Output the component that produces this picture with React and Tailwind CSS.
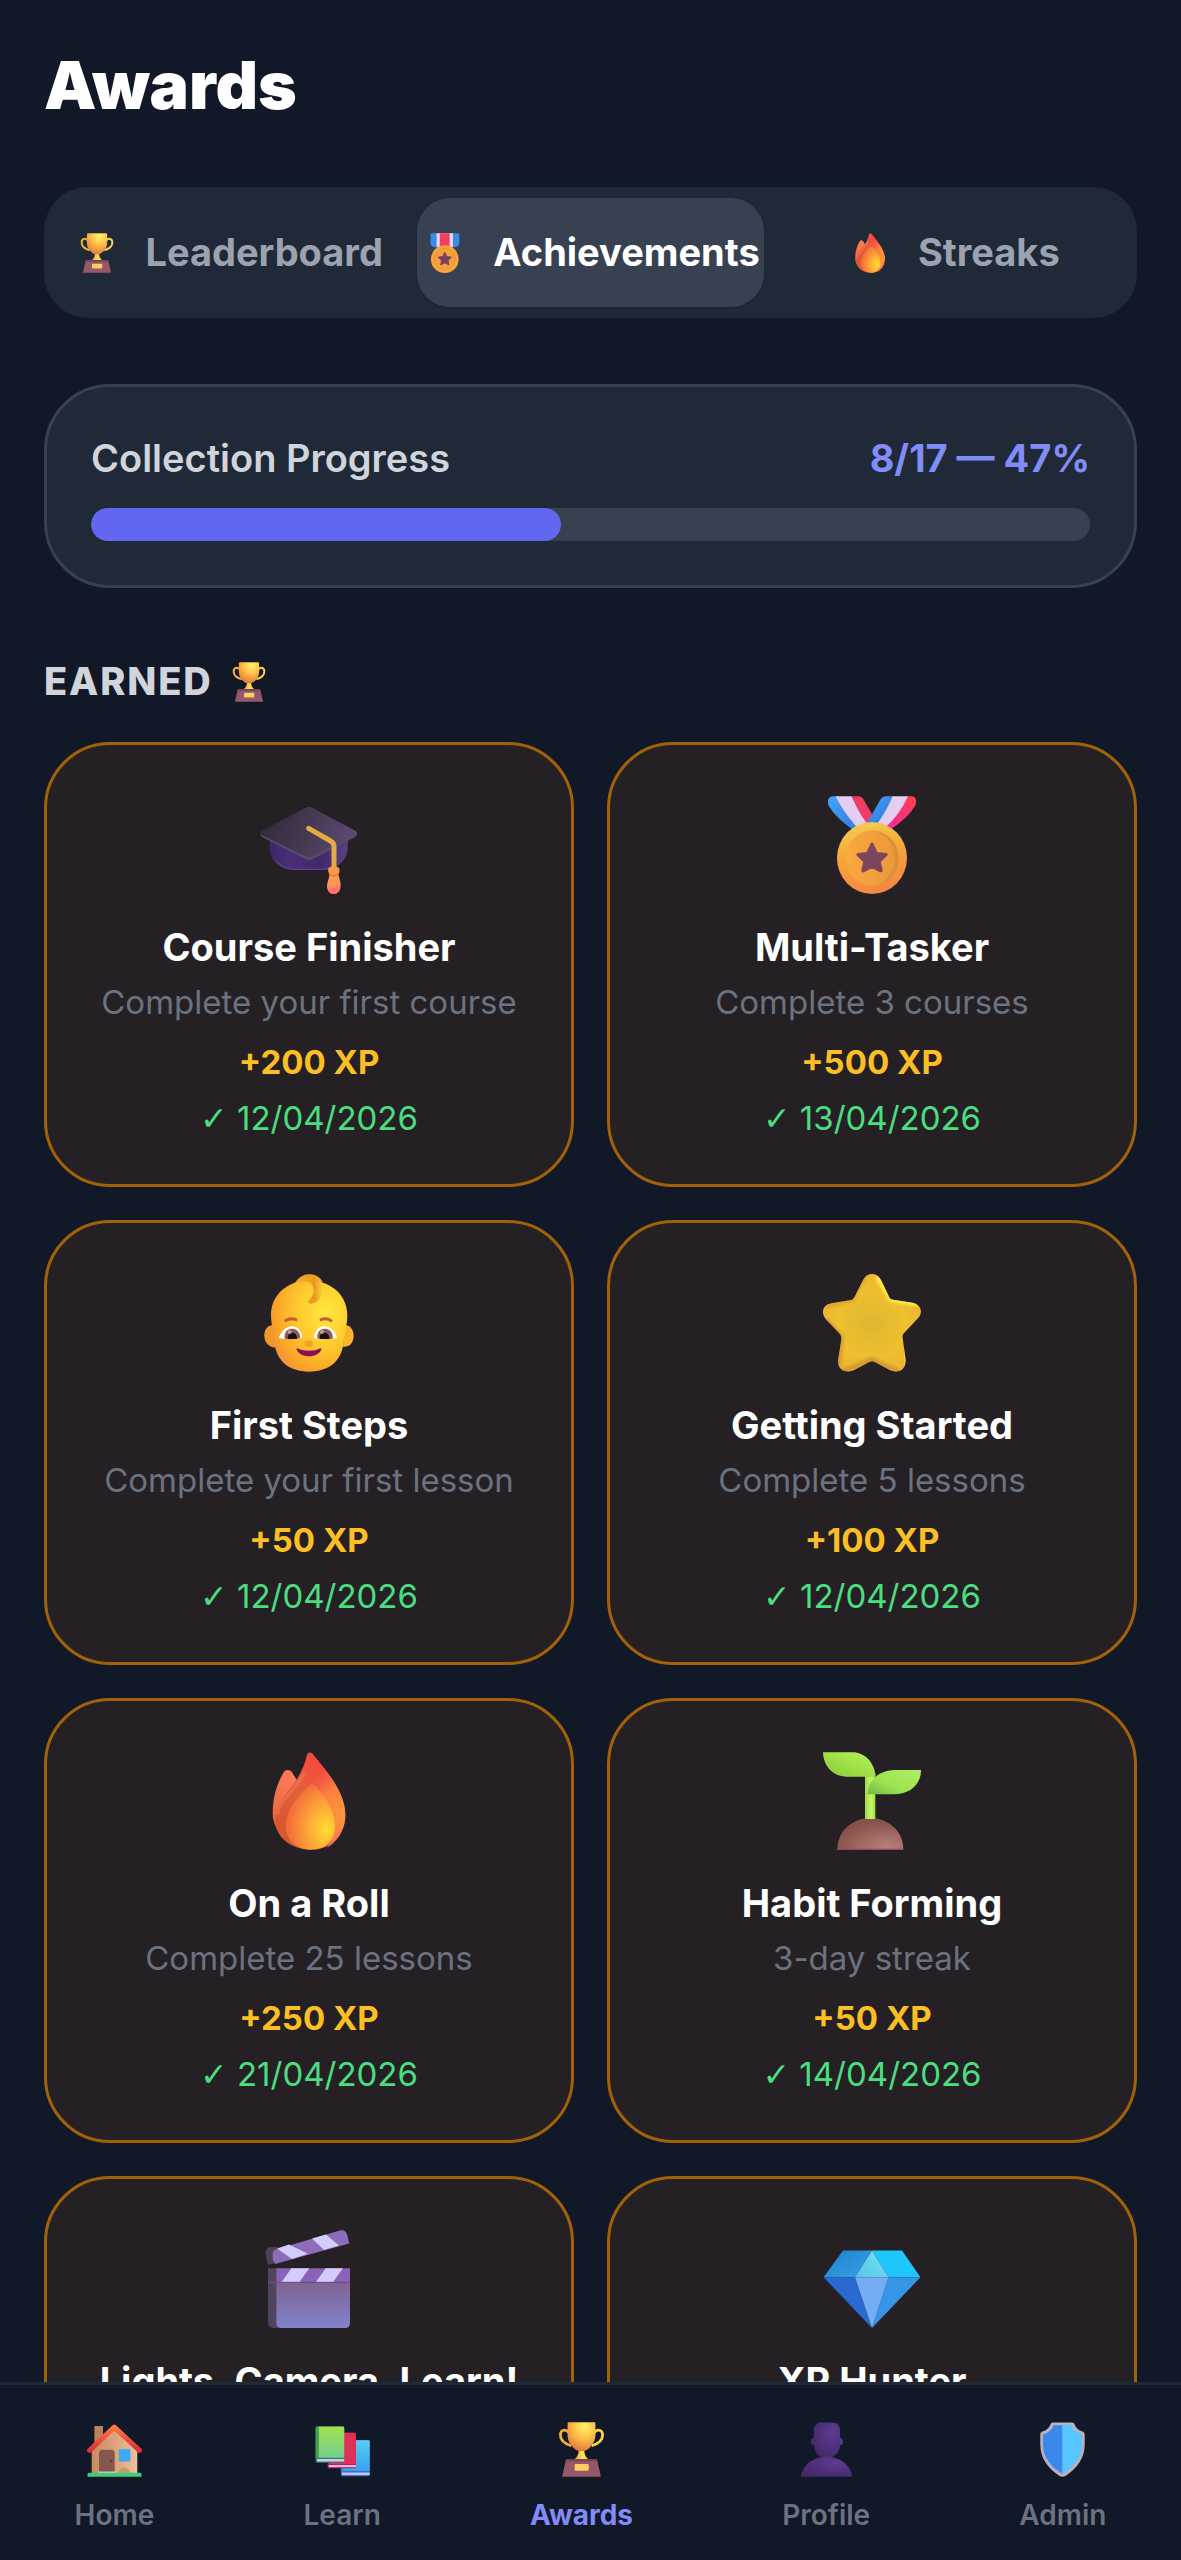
import React, { useState } from "react";

const Trophy = ({ className }) => (
	<svg viewBox="0 0 32 32" className={className} aria-hidden="true">
		<defs>
			<radialGradient id="cup" cx="0.62" cy="0.15" r="0.9">
				<stop offset="0" stopColor="#fff36b" />
				<stop offset="0.45" stopColor="#fdc046" />
				<stop offset="1" stopColor="#e2743c" />
			</radialGradient>
			<linearGradient id="cupStem" x1="0" x2="1">
				<stop offset="0" stopColor="#e69a3c" />
				<stop offset="0.6" stopColor="#ffe35c" />
				<stop offset="1" stopColor="#f5b843" />
			</linearGradient>
		</defs>
		<path d="M8.6 6.2C6.8 3.6 3.8 4.6 3.7 7.4c0 3.2 3 5.4 6.4 6.4" fill="none" stroke="#f3b03c" strokeWidth="1.6" />
		<path d="M23.4 6.2c1.800-2.600 4.800-1.600 4.900 1.200 0 3.200-3 5.400-6.400 6.400" fill="none" stroke="#ffd444" strokeWidth="1.6" />
		<path d="M14.400 15.500h3.200c0 3 .6 4.700 2.700 6.300h-8.600c2.100-1.600 2.700-3.300 2.700-6.300z" fill="url(#cupStem)" />
		<path d="M8.600.2h14.800c.4 0 .7.3.7.7v7c0 4.600-4.200 8.800-6.700 9h-2.800c-2.500-.2-6.700-4.400-6.700-9v-7c0-.4.3-.7.7-.7z" fill="url(#cup)" />
		<path d="M7.800 21.600h16.400c.5 0 .8.3.9.7l2.200 9.500H4.700l2.200-9.500c.1-.4.400-.7.900-.7z" fill="#95576a" />
		<path d="M7.800 21.600h16.400c.5 0 .8.3.9.7l.1.600H6.800l.1-.600c.1-.4.400-.7.900-.7z" fill="#7d4157" />
		<rect x="12" y="24.500" width="8.200" height="3.800" rx=".6" fill="#ffcd62" />
	</svg>
);

const SportsMedal = ({ className }) => (
	<svg viewBox="0 0 39 39" className={className} aria-hidden="true">
		<path d="M7 .3h25c.8 0 1.400.6 1.400 1.400V10c0 2-1.800 3.800-4 3.800H9.400c-2.200 0-4-1.800-4-3.800V1.700C5.400.9 6.200.3 7 .3z" fill="#3b8ae8" />
		<path d="M11.300.3h16v13.500h-16z" fill="#e5d3f5" />
		<path d="M14.400.3h9.600v13.500h-9.600z" fill="#f43f5e" />
		<circle cx="19.300" cy="25.500" r="13.500" fill="#f9a53a" />
		<circle cx="19.300" cy="25.200" r="10.300" fill="#f4a03d" stroke="#e08a3a" strokeWidth=".6" />
		<path d="M19.300 19l1.900 4 4.400.6-3.200 3 .8 4.400-3.900-2.100-3.900 2.100.8-4.400-3.200-3 4.400-.6z" fill="#7b405b" stroke="#7b405b" strokeLinejoin="round" />
	</svg>
);

const Flame = ({ className }) => (
	<svg viewBox="60 47 294 294" className={className} aria-hidden="true">
		<defs>
			<linearGradient id="flameOut" x1="0.1" y1="0.8" x2="0.7" y2="0.1">
				<stop offset="0" stopColor="#d9572f" />
				<stop offset="0.55" stopColor="#e4603a" />
				<stop offset="1" stopColor="#fb4540" />
			</linearGradient>
			<radialGradient id="flameSide" cx="0.95" cy="0.62" r="0.6">
				<stop offset="0" stopColor="#ff9838" />
				<stop offset="0.5" stopColor="#fd8540" stopOpacity="0.85" />
				<stop offset="1" stopColor="#f64a40" stopOpacity="0" />
			</radialGradient>
			<radialGradient id="flameIn" cx="0.82" cy="0.68" r="0.75">
				<stop offset="0" stopColor="#ffdc30" />
				<stop offset="0.5" stopColor="#fda637" />
				<stop offset="1" stopColor="#f4703a" />
			</radialGradient>
			<linearGradient id="flameEdge" x1="0" y1="1" x2="0.5" y2="0">
				<stop offset="0" stopColor="#e0623c" />
				<stop offset="1" stopColor="#ff7c58" />
			</linearGradient>
		</defs>
		<path d="M98 230c0-50 15-92 33-122 7-10 18-9 25 0l14 22 30 60-40 130c-38-16-62-50-62-90z" fill="url(#flameEdge)" />
		<path d="M201 55c4-8 13-8 18-1 40 50 97 112 97 182 0 58-40 104-101 104-66 0-110-40-110-92 0-62 76-98 96-193z" fill="url(#flameOut)" />
		<path d="M201 55c4-8 13-8 18-1 40 50 97 112 97 182 0 58-40 104-101 104-66 0-110-40-110-92 0-62 76-98 96-193z" fill="url(#flameSide)" />
		<path d="M112 232c10-48 55-66 80-122" fill="none" stroke="#f47450" strokeWidth="9" strokeLinecap="round" opacity="0.7" />
		<path d="M262 334c24-14 40-36 47-62-8 10-20 22-32 36z" fill="#fa7468" opacity="0.8" />
		<path d="M206 150c6-6 16-6 22 1 28 28 57 72 57 118 0 44-30 71-72 71-45 0-75-28-75-70 0-50 38-92 68-120z" fill="url(#flameIn)" />
	</svg>
);

const GradCap = ({ className }) => (
	<svg viewBox="60 64 294 294" className={className} aria-hidden="true">
		<defs>
			<linearGradient id="capBase" x1="0" x2="1">
				<stop offset="0" stopColor="#3d2766" />
				<stop offset="0.25" stopColor="#4a2d75" />
				<stop offset="0.65" stopColor="#3f2a68" />
				<stop offset="1" stopColor="#5c3f87" />
			</linearGradient>
			<linearGradient id="capTop" x1="0" y1="0.4" x2="1" y2="0.6">
				<stop offset="0" stopColor="#322b3c" />
				<stop offset="0.5" stopColor="#463a52" />
				<stop offset="1" stopColor="#5e4a75" />
			</linearGradient>
			<linearGradient id="tassel" x1="0" y1="0" x2="0.1" y2="1">
				<stop offset="0" stopColor="#f99a3e" />
				<stop offset="0.6" stopColor="#ff9a50" />
				<stop offset="1" stopColor="#ff6a70" />
			</linearGradient>
		</defs>
		<g transform="translate(0 17)">
			<path d="M89 160h234v42c0 36-30 66-76 66h-84c-44 0-74-28-74-66z" fill="url(#capBase)" />
			<path d="M108 240c16 20 34 26 55 27h84c14 0 26-3 36-8" fill="none" stroke="#6a48a0" strokeWidth="3" />
			<path d="M66 154l130-70c7-4 15-4 22 0l128 69c7 4 7 12 0 17L220 235c-8 5-18 5-26 0L66 170c-6-4-6-12 0-16z" fill="#594868" />
			<path d="M66 151l130-67c7-4 15-4 22 0l128 67c6 4 6 9 0 13L218 227c-7 5-16 5-22 0L66 165c-6-4-6-10 0-14z" fill="url(#capTop)" />
			<path d="M206 144l66 38c7 4 10 9 10 16v72" fill="none" stroke="#e3ab42" strokeWidth="15" strokeLinecap="round" strokeLinejoin="round" />
			<path d="M266 262c8-5 24-5 31 0 3 8 2 14-2 20 3 14 8 24 7 36-1 14-9 24-20 24s-21-9-21-24c0-12 6-22 8-36-5-6-6-13-3-20z" fill="url(#tassel)" />
			<path d="M267 283c9 4 20 4 28 0" fill="none" stroke="#e07a38" strokeWidth="4" />
		</g>
	</svg>
);

const Medal = ({ className }) => (
	<svg viewBox="69 46 294 294" className={className} aria-hidden="true">
		<defs>
			<linearGradient id="ribbonBlue" x1="0" y1="0" x2="1" y2="1">
				<stop offset="0" stopColor="#44a4f7" />
				<stop offset="1" stopColor="#3173dc" />
			</linearGradient>
			<linearGradient id="ribbonRed" x1="1" y1="0" x2="0" y2="1">
				<stop offset="0" stopColor="#fd4045" />
				<stop offset="1" stopColor="#f727a4" />
			</linearGradient>
			<linearGradient id="medalRim" x1="0.4" y1="0" x2="0.6" y2="1">
				<stop offset="0" stopColor="#f3cc52" />
				<stop offset="0.4" stopColor="#f7a83a" />
				<stop offset="1" stopColor="#f58444" />
			</linearGradient>
			<linearGradient id="medalFace" x1="0" x2="1">
				<stop offset="0" stopColor="#fba83f" />
				<stop offset="1" stopColor="#e9983a" />
			</linearGradient>
		</defs>
		<path d="M98 47h11l100 86-50 14C125 125 99 97 87 77c-7-14-2-30 11-30z" fill="url(#ribbonBlue)" />
		<path d="M107 47h48l55 82-36 14c-24-26-50-60-67-96z" fill="#e4cdf3" />
		<path d="M155 47h20c7 0 12 4 16 10l28 48-16 26c-18-22-36-54-48-84z" fill="#ee3d62" />
		<path d="M335 47h-12L250 130l20 16c32-18 62-48 75-70 7-14 3-29-10-29z" fill="url(#ribbonRed)" />
		<path d="M324 47h-48l-48 85 28 8c28-24 52-58 68-93z" fill="#e4cdf3" />
		<path d="M278 47h-20c-7 0-13 4-17 10l-42 74h32c18-26 36-56 47-84z" fill="url(#ribbonBlue)" />
		<ellipse cx="216" cy="232" rx="105" ry="108" fill="url(#medalRim)" />
		<ellipse cx="217" cy="232" rx="80" ry="83" fill="url(#medalFace)" />
		<path d="M220 151c44 3 76 37 76 82 0 40-28 74-64 80 32-14 52-44 52-80 0-44-26-74-64-82z" fill="#d98b36" opacity="0.7" />
		<path d="M216 191l13 28 29 3-21 20 6 28-27-13-27 13 6-28-21-20 29-3z" fill="#7b4560" stroke="#7b4560" strokeWidth="10" strokeLinejoin="round" />
	</svg>
);

const Baby = ({ className }) => (
	<svg viewBox="60 54 294 294" className={className} aria-hidden="true">
		<defs>
			<radialGradient id="babyFace" cx="0.72" cy="0.35" r="0.8">
				<stop offset="0" stopColor="#ffe83c" />
				<stop offset="0.5" stopColor="#ffc72c" />
				<stop offset="0.85" stopColor="#f9a128" />
				<stop offset="1" stopColor="#f08f48" />
			</radialGradient>
			<linearGradient id="babyCurl" x1="0" x2="1">
				<stop offset="0" stopColor="#f6ab26" />
				<stop offset="0.7" stopColor="#e99a22" />
				<stop offset="1" stopColor="#ffd03a" />
			</linearGradient>
		</defs>
		<path d="M104 208c-20-4-32 12-31 32 1 22 16 36 36 34z" fill="#f0982a" />
		<path d="M311 208c18-4 30 12 30 32-1 22-14 34-32 32z" fill="#fcb42a" />
		<path d="M162 84c14-20 28-30 46-29 18 0 32 8 40 22l-20 26z" fill="#eca022" />
		<path d="M93 178c0-60 46-104 114-104s115 44 115 104c0 26-8 52-12 84-5 52-42 85-103 85s-98-33-103-85c-3-32-11-58-11-84z" fill="url(#babyFace)" />
		<path d="M170 76c14-16 48-22 66-6 20 18 14 70-22 73-14 1-10-9-4-14 16-14 14-44-4-50-12-4-26-5-36-3z" fill="url(#babyCurl)" />
		<path d="M137 194c8-6 20-7 31-3" fill="none" stroke="#c85a34" strokeWidth="9" strokeLinecap="round" />
		<path d="M243 191c10-4 22-3 30 3" fill="none" stroke="#c85a34" strokeWidth="9" strokeLinecap="round" />
		<path d="M116 246c8-20 22-35 40-35s28 16 31 34c-18 6-50 5-71 1z" fill="#fff" />
		<path d="M221 245c3-18 14-34 32-34s32 14 39 35c-20 4-52 5-71-1z" fill="#fff" />
		<path d="M134 248c-2-18 6-30 22-30s26 14 24 29c-12 3-32 3-46 1z" fill="#8d5a55" />
		<path d="M232 247c-2-16 6-29 22-29s26 12 24 30c-14 2-34 2-46-1z" fill="#8d5a55" />
		<path d="M143 249c-1-12 5-19 14-19s15 8 14 19z" fill="#1a0f12" />
		<path d="M239 249c-1-12 5-19 14-19s16 8 15 19z" fill="#1a0f12" />
		<circle cx="149" cy="228" r="6" fill="#c79a90" />
		<circle cx="246" cy="228" r="6" fill="#c79a90" />
		<ellipse cx="206" cy="263" rx="13" ry="10" fill="#f3a227" />
		<path d="M171 277c22 10 50 10 71 0 3 0 2 5 0 8-14 21-56 21-70 0-2-4-3-8-1-8z" fill="#880c58" />
	</svg>
);

const Star = ({ className }) => (
	<svg viewBox="69 54 294 294" className={className} aria-hidden="true">
		<defs>
			<radialGradient id="starFill" cx="0.5" cy="0.5" r="0.55">
				<stop offset="0" stopColor="#dcb630" />
				<stop offset="0.6" stopColor="#efc02f" />
				<stop offset="1" stopColor="#eeb033" />
			</radialGradient>
			<filter id="starSoft" x="-20%" y="-20%" width="140%" height="140%">
				<feGaussianBlur stdDeviation="5" />
			</filter>
			<clipPath id="starClip">
				<path d="M216 54c13 0 22 8 28 20l23 48c2 5 6 8 12 9l58 9c28 5 34 32 14 50l-38 40c-5 5-6 9-5 15l8 62c4 34-20 48-48 34l-42-22c-7-4-13-4-20 0l-42 22c-28 14-54 0-49-32l9-58c1-8-1-13-6-19l-38-40c-20-20-12-46 15-50l54-9c8-1 12-5 15-11l24-48c6-12 15-20 28-20z" />
			</clipPath>
		</defs>
		<g clipPath="url(#starClip)">
			<rect x="60" y="50" width="310" height="310" fill="url(#starFill)" />
			<path d="M232 62l42 68 78 14" fill="none" stroke="#ffee48" strokeWidth="16" filter="url(#starSoft)" />
			<path d="M315 256l6 86" fill="none" stroke="#ffe33f" strokeWidth="14" filter="url(#starSoft)" />
			<path d="M192 64l-34 68-80 20" fill="none" stroke="#ce932f" strokeWidth="9" filter="url(#starSoft)" opacity="0.7" />
			<path d="M76 190l50 52-10 90" fill="none" stroke="#c99030" strokeWidth="12" filter="url(#starSoft)" opacity="0.75" />
			<path d="M124 348l92-38 80 38" fill="none" stroke="#c98b32" strokeWidth="14" filter="url(#starSoft)" opacity="0.75" />
		</g>
	</svg>
);

const Seedling = ({ className }) => (
	<svg viewBox="69 47 294 294" className={className} aria-hidden="true">
		<defs>
			<linearGradient id="leafLeft" x1="0" y1="1" x2="1" y2="0">
				<stop offset="0" stopColor="#8cc63a" />
				<stop offset="0.4" stopColor="#9bdc45" />
				<stop offset="1" stopColor="#b6f45a" />
			</linearGradient>
			<linearGradient id="leafRight" x1="0" y1="1" x2="1" y2="0">
				<stop offset="0" stopColor="#74b845" />
				<stop offset="0.4" stopColor="#9be450" />
				<stop offset="1" stopColor="#b2ee62" />
			</linearGradient>
			<linearGradient id="sprout" x1="0" x2="1">
				<stop offset="0" stopColor="#a2d848" />
				<stop offset="0.6" stopColor="#c6f961" />
				<stop offset="1" stopColor="#9fdc4c" />
			</linearGradient>
			<radialGradient id="soil" cx="0.75" cy="0.9" r="0.8">
				<stop offset="0" stopColor="#b97f7c" />
				<stop offset="0.6" stopColor="#9b645e" />
				<stop offset="1" stopColor="#86524a" />
			</radialGradient>
		</defs>
		<path d="M112 340c0-54 42-94 99-94s99 40 99 94z" fill="url(#soil)" />
		<path d="M112 337h198v4H112z" fill="#93496a" />
		<path d="M195 110h31v138h-31z" fill="url(#sprout)" />
		<path d="M69 48h88c38 0 68 32 69 73h-86c-42 0-70-32-71-73z" fill="url(#leafLeft)" />
		<path d="M363 101h-78c-46 0-82 30-82 73h76c52 0 84-30 84-73z" fill="url(#leafRight)" />
	</svg>
);

const Clapper = ({ className }) => (
	<svg viewBox="0 0 98 98" className={className} aria-hidden="true">
		<defs>
			<linearGradient id="board" x1="0" y1="0" x2="0" y2="1">
				<stop offset="0" stopColor="#7f6490" />
				<stop offset="1" stopColor="#8182cd" />
			</linearGradient>
		</defs>
		<path d="M5.700 23c0-3 1-5 4-6l8 0-3 16-6.500 2c-1.500-4-2.500-8-2.500-12z" fill="#50405a" />
		<path d="M14 20l65-19.300c4-1.200 7 0 8 3.500l2.300 9.400L15 34c-3-5-3-10-1-14z" fill="#8d6cb9" />
		<path d="M17 18.600l12-4L47.900 23.800 32 29z" fill="#d2ccff" />
		<path d="M52 8.600l14-4L79 15.600 64 20z" fill="#d2ccff" />
		<path d="M8 38.300h10V98h-4c-4 0-6-3-6-6z" fill="#51445f" />
		<path d="M16.400 38.300H90v14H16.400z" fill="#8b62b8" />
		<path d="M31.400 38.300h17.900L39.300 52.300H21.400z" fill="#d2ccff" />
		<path d="M65.700 38.300h17.200L72.900 52.300H55.700z" fill="#d2ccff" />
		<path d="M16.400 52.300H90V93c0 3-2 5-5 5H21c-3 0-4.600-2-4.600-5z" fill="url(#board)" />
		<path d="M8 52.300h82" stroke="#6b4b92" strokeWidth="1" />
	</svg>
);

const Diamond = ({ className }) => (
	<svg viewBox="0 0 98 98" className={className} aria-hidden="true">
		<defs>
			<linearGradient id="gemLeft" x1="0" y1="0" x2="1" y2="1">
				<stop offset="0" stopColor="#1b7fd0" />
				<stop offset="1" stopColor="#38a5e0" />
			</linearGradient>
			<linearGradient id="gemMid" x1="0" y1="1" x2="1" y2="0">
				<stop offset="0" stopColor="#5bc2e6" />
				<stop offset="1" stopColor="#6ee6fa" />
			</linearGradient>
		</defs>
		<path d="M20 20.600h29L32 47.300H.6z" fill="url(#gemLeft)" />
		<path d="M49 20.600h30l18.400 26.700H65.600z" fill="#1fc6fb" />
		<path d="M49 20.600l16.600 26.700H32z" fill="url(#gemMid)" />
		<path d="M.6 47.300H32L49 98z" fill="#2969d2" />
		<path d="M97.400 47.300H65.600L49 98z" fill="#3595e8" />
		<path d="M32 47.300h33.600L49 98z" fill="#74adf4" />
	</svg>
);

const House = ({ className }) => (
	<svg viewBox="0 0 55 55" className={className} aria-hidden="true">
		<defs>
			<linearGradient id="wall" x1="0" x2="1">
				<stop offset="0" stopColor="#c98a5e" />
				<stop offset="0.5" stopColor="#dca37a" />
				<stop offset="1" stopColor="#ecc19a" />
			</linearGradient>
			<linearGradient id="roof" x1="0" y1="0" x2="0" y2="1">
				<stop offset="0" stopColor="#fd7840" />
				<stop offset="1" stopColor="#dc3038" />
			</linearGradient>
		</defs>
		<path d="M7.400 5c0-.6.400-1 1-1h6.600c.6 0 1 .4 1 1v14l-8.600 9z" fill="#b7845e" />
		<path d="M4.700 28L27.300 6l23 22v23H4.700z" fill="url(#wall)" />
		<path d="M12 51V31c0-2 1.300-3.300 3.300-3.300h9c2 0 3.400 1.300 3.400 3.300v20z" fill="#84574f" />
		<circle cx="24" cy="39" r="1.300" fill="#5e3b36" />
		<path d="M11.500 49.500h18v1.800h-18z" fill="#d5cdd6" />
		<rect x="31.900" y="27" width="11.500" height="12.400" rx="1" fill="#3fa9f5" />
		<path d="M31 50.700c1-4 4-5.500 6.500-5 3 .3 5 2 6 5z" fill="#c79b6a" />
		<path d="M2.600 28.300L27.300 5.200 52.400 28.300" fill="none" stroke="url(#roof)" strokeWidth="5" strokeLinejoin="round" strokeLinecap="round" />
		<path d="M2 50.700h51c.8 0 1.500.9 1.500 2v2H.5v-2c0-1.100.7-2 1.500-2z" fill="#3fce7c" />
	</svg>
);

const Books = ({ className }) => (
	<svg viewBox="0 0 56 55" className={className} aria-hidden="true">
		<defs>
			<linearGradient id="bookGreen" x1="0" y1="0" x2="0" y2="1">
				<stop offset="0" stopColor="#a3e04e" />
				<stop offset="1" stopColor="#74d08e" />
			</linearGradient>
			<linearGradient id="bookBlue" x1="0" y1="0" x2="0" y2="1">
				<stop offset="0" stopColor="#55cdf6" />
				<stop offset="1" stopColor="#38a2ee" />
			</linearGradient>
		</defs>
		<rect x="26.300" y="17.700" width="29.400" height="37" rx="1.500" fill="#3574cf" />
		<path d="M28 18h26.200c.8 0 1.500.7 1.500 1.500v30H28z" fill="url(#bookBlue)" />
		<path d="M27.500 51h28.200v2.400H27.500z" fill="#d5c6ee" />
		<rect x="12.900" y="10.400" width="28.700" height="36.300" rx="1.500" fill="#b31f5c" />
		<path d="M15 10.400h25.100c.8 0 1.500.7 1.500 1.500v30.300H15z" fill="#e03058" />
		<path d="M14 43.300h27.600v2.200H14z" fill="#e3b9e0" />
		<rect x=".6" y="4" width="29.200" height="37" rx="1.500" fill="#2f7d68" />
		<path d="M.6 5.500C.6 4.700 1.300 4 2.100 4h2v32H.6z" fill="#46a04b" />
		<path d="M4 4h24.300c.8 0 1.500.7 1.500 1.500V36H4z" fill="url(#bookGreen)" />
		<path d="M2 37.200h27.800v2.600H2z" fill="#d5c6ee" />
	</svg>
);

const Person = ({ className }) => (
	<svg viewBox="0 0 55 55" className={className} aria-hidden="true">
		<defs>
			<radialGradient id="bust" cx="0.7" cy="0.3" r="0.8">
				<stop offset="0" stopColor="#5d3b91" />
				<stop offset="1" stopColor="#43296a" />
			</radialGradient>
		</defs>
		<ellipse cx="14.500" cy="19.500" rx="2.800" ry="3.600" fill="#43296a" />
		<ellipse cx="41" cy="19.500" rx="2.800" ry="3.600" fill="#5d3b91" />
		<path d="M22.500.5h11c4.600 0 7.600 3.500 7.600 8V22c0 8-5 14-13.300 14S14.700 30 14.700 22V8.500c0-4.500 3.200-8 7.800-8z" fill="url(#bust)" />
		<path d="M1.800 54.700c1.700-11.700 12-20 25.700-20s24 8.300 25.700 20z" fill="url(#bust)" />
	</svg>
);

const Shield = ({ className }) => (
	<svg viewBox="0 0 55 55" className={className} aria-hidden="true">
		<path d="M18 .4h19c1.500 0 2.200.7 2.700 2C40.800 5.500 43 8 47 9.200c2 .6 2.700 1.600 2.700 3.300v10.300C49.700 36 42 46.500 30.500 54c-2 1-4 1-6 0C13 46.500 5.300 36 5.300 22.800V12.500c0-1.700.7-2.700 2.700-3.300 4-1.200 6.200-3.700 7.300-6.800.5-1.300 1.200-2 2.700-2z" fill="#b9b0bd" />
		<path d="M27.500 3.200h-9C17.300 7.600 13.500 11 8 12.300v10.500C8 35 15.500 44.500 27.500 52z" fill="#3a88ea" />
		<path d="M27.500 3.200h9C37.700 7.600 41.500 11 47 12.300v10.500C47 35 39.500 44.500 27.500 52z" fill="#55c6ff" />
	</svg>
);

const tabs = [
	{ id: "leaderboard", label: "Leaderboard", Icon: Trophy },
	{ id: "achievements", label: "Achievements", Icon: SportsMedal },
	{ id: "streaks", label: "Streaks", Icon: Flame },
];

const earned = [
	{ title: "Course Finisher", description: "Complete your first course", xp: 200, date: "12/04/2026", Icon: GradCap },
	{ title: "Multi-Tasker", description: "Complete 3 courses", xp: 500, date: "13/04/2026", Icon: Medal },
	{ title: "First Steps", description: "Complete your first lesson", xp: 50, date: "12/04/2026", Icon: Baby },
	{ title: "Getting Started", description: "Complete 5 lessons", xp: 100, date: "12/04/2026", Icon: Star },
	{ title: "On a Roll", description: "Complete 25 lessons", xp: 250, date: "21/04/2026", Icon: Flame },
	{ title: "Habit Forming", description: "3-day streak", xp: 50, date: "14/04/2026", Icon: Seedling },
	{ title: "Lights, Camera, Learn!", Icon: Clapper },
	{ title: "XP Hunter", Icon: Diamond },
];

const navItems = [
	{ label: "Home", Icon: House },
	{ label: "Learn", Icon: Books },
	{ label: "Awards", Icon: Trophy },
	{ label: "Profile", Icon: Person },
	{ label: "Admin", Icon: Shield },
];

const AchievementCard = ({ title, description, xp, date, Icon }) => (
	<li className="flex flex-col items-center rounded-[66px] border-3 border-[#a16207] bg-[#252024] px-8 pt-[51px] pb-11 text-center">
		<Icon className="size-[98px]" />
		<h3 className="mt-[26px] text-[38px] leading-[55px] font-bold text-white">{title}</h3>
		{description && <p className="mt-[5px] text-[33px] leading-[44px] text-[#6b7280]">{description}</p>}
		{xp && <p className="mt-4 text-[33px] leading-[44px] font-bold text-[#fbbf24]">+{xp} XP</p>}
		{date && (
			<p className="mt-3 text-[33px] leading-[44px] text-[#4ade80]">
				<span className="font-['DejaVu_Sans',sans-serif] leading-none">✓</span> {date}
			</p>
		)}
	</li>
);

const App = () => {
	const [activeTab, setActiveTab] = useState("achievements");
	const total = 17;
	const done = 8;
	const percent = Math.round((done / total) * 100);

	return (
		<div className="flex h-screen flex-col bg-[#111827] font-['Inter',sans-serif]">
			<main className="min-h-0 flex-1 overflow-hidden px-11 pt-11">
				<h1 className="text-[66px] leading-[82px] font-black text-white">Awards</h1>

				<div role="tablist" className="mt-[61px] flex gap-4 rounded-[44px] bg-[#1f2937] p-[11px]">
					{tabs.map(({ id, label, Icon }) => (
						<button
							key={id}
							type="button"
							role="tab"
							aria-selected={activeTab === id}
							onClick={() => setActiveTab(id)}
							className={
								activeTab === id
									? "flex min-w-0 flex-1 items-center justify-center gap-7 rounded-[33px] bg-[#374151] py-[27px] pl-1 text-[38px] leading-[55px] font-bold text-white shadow-sm"
									: "flex min-w-0 flex-1 items-center justify-center gap-7 rounded-[33px] py-[27px] pl-1 text-[38px] leading-[55px] font-bold text-[#9ca3af]"
							}
						>
							<Icon className="size-10 shrink-0" />
							{label}
						</button>
					))}
				</div>

				{/* Collection progress */}
				<section className="mt-[66px] rounded-[66px] border-3 border-[#374151] bg-[#1f2937] p-11">
					<div className="flex items-center justify-between text-[38px] leading-[55px]">
						<span className="font-semibold text-[#d1d5db]">Collection Progress</span>
						<span className="font-bold text-[#818cf8]">
							{done}/{total} — {percent}%
						</span>
					</div>
					<div className="mt-[22px] h-[33px] overflow-hidden rounded-full bg-[#374151]">
						<div className="h-full rounded-full bg-[#6366f1]" style={{ width: `${percent}%` }} />
					</div>
				</section>

				<h2 className="mt-[66px] flex items-center gap-4 text-[38px] leading-[55px] font-extrabold tracking-wider text-[#d1d5db] uppercase">
					Earned
					<Trophy className="size-10" />
				</h2>
				<ul className="mt-[33px] grid grid-cols-2 gap-[33px]">
					{earned.map((item) => (
						<AchievementCard key={item.title} {...item} />
					))}
				</ul>
			</main>

			<nav className="flex justify-around border-t-3 border-[#1f2937] bg-[#111827] pt-[37px] pb-6">
				{navItems.map(({ label, Icon }) => (
					<a
						key={label}
						href="#"
						className={
							label === "Awards"
								? "flex flex-col items-center gap-[17px] px-8 text-[28px] leading-[42px] font-bold text-[#818cf8]"
								: "flex flex-col items-center gap-[17px] px-8 text-[28px] leading-[42px] font-semibold text-[#6b7280]"
						}
					>
						<Icon className="size-[55px]" />
						{label}
					</a>
				))}
			</nav>
		</div>
	);
};

export default App;
